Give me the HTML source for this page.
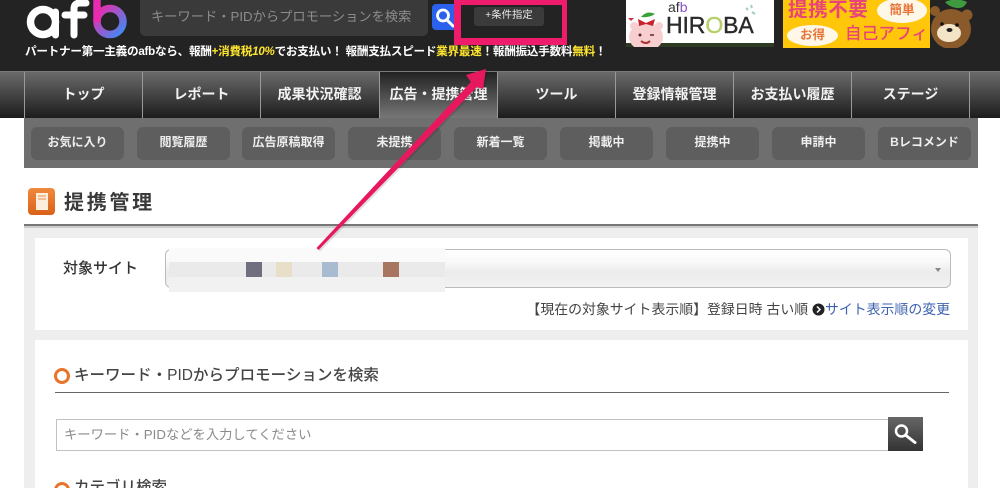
<!DOCTYPE html>
<html lang="ja"><head><meta charset="utf-8"><title>afb</title>
<style>
*{box-sizing:border-box;margin:0;padding:0}
html,body{width:1000px;height:488px;overflow:hidden;background:#fff}
body{position:relative;font-family:"Liberation Sans","Noto Sans CJK JP",sans-serif;color:#333}
#w{position:absolute;left:0;top:0;width:1000px;height:488px;overflow:hidden;filter:blur(.3px)}
.a{position:absolute;white-space:nowrap}
#hd{left:0;top:0;width:1000px;height:72px;background:#232323}
#nav{left:0;top:71px;width:1000px;height:47px;background:linear-gradient(#6a6a6a,#4b4b4b 40%,#1c1c1c);border-top:1px solid #7a7a7a}
.n{position:absolute;top:72px;height:46px;width:118px;text-align:center;line-height:45px;font-size:14px;font-weight:700;color:#f2f2f2;border-left:1px solid #9a9a9a}
.n.on{background:linear-gradient(#222,#444 40%,#777);}
.s{position:absolute;top:127px;width:93px;height:33px;background:#5e5e5e;border-radius:6px;text-align:center;line-height:31px;font-size:12px;font-weight:700;color:#eee}
.y{color:#ffe62e}
</style></head><body><div id="w">
<div class="a" id="hd"></div>

<svg class="a" style="left:0;top:0" width="140" height="44" viewBox="0 0 140 44" role="img" aria-label="afb">
<defs><linearGradient id="g" x1="0" y1="0" x2="1" y2="1"><stop offset="0" stop-color="#ec2aa8"/><stop offset="1" stop-color="#3d8cf5"/></linearGradient></defs>
<circle cx="43" cy="22" r="12.5" fill="none" stroke="#fff" stroke-width="7.5"/>
<path d="M55.5 12V35" stroke="#fff" stroke-width="7" stroke-linecap="round"/>
<path d="M86 3h-6q-6 0-6 6v26M65 15h19" fill="none" stroke="#fff" stroke-width="7" stroke-linecap="round"/>
<circle cx="110" cy="21.500" r="13" fill="none" stroke="url(#g)" stroke-width="7.500"/>
<path d="M97 -2V22" stroke="#e92cae" stroke-width="7.500"/>
</svg>

<div class="a" style="left:140px;top:0;width:288px;height:36px;background:#3a3a3a;border-radius:0 0 5px 5px;color:#8c8c8c;font-size:13.250px;line-height:34px;padding-left:11px">キーワード・PIDからプロモーションを検索</div>
<div class="a" style="left:432px;top:4px;width:26px;height:26px;background:#2a62ee;border-radius:4px"></div>
<svg class="a" style="left:432px;top:4px" width="26" height="26"><circle cx="11" cy="11.500" r="5.500" fill="none" stroke="#fff" stroke-width="2.800"/><path d="M15 16l6 6" stroke="#fff" stroke-width="3" stroke-linecap="round"/></svg>
<div class="a" style="left:474px;top:7px;width:70px;height:19px;background:#3b3b3b;border-radius:3px;color:#e8e8e8;font-size:10.400px;line-height:17px;text-align:center">+条件指定</div>

<div class="a" style="left:25px;top:44px;font-size:11.600px;font-weight:700;line-height:16px;color:#fff;letter-spacing:-.26px">パートナー第一主義のafbなら、報酬<span class="y">+消費税<i>10%</i></span>でお支払い！ 報酬支払スピード<span class="y">業界最速</span>！報酬振込手数料<span class="y">無料</span>！</div>

<!-- HIROBA banner -->
<div class="a" style="left:626px;top:0;width:148px;height:47px;background:#fff;overflow:hidden">
 <div class="a" style="left:0;top:43px;width:148px;height:4px;background:#2d3b22"></div>
 <div class="a" style="left:42px;top:-1px;font-size:14px;color:#333;line-height:16px">af<span style="color:#8a4fd0">b</span></div>
 <div class="a" style="left:40px;top:12px;font-size:23px;font-weight:400;line-height:27px;color:#2a2a2a;letter-spacing:-.1px;-webkit-text-stroke:.4px #2a2a2a">HIR<span style="color:#b5cf6a;-webkit-text-stroke:.4px #b5cf6a">O</span>BA</div>
 <svg class="a" style="left:118px;top:3px" width="16" height="14"><path d="M2 5l2 2M7 2l1 3M8 9l3 2" stroke="#9cd0c0" stroke-width="2"/></svg>
 <svg class="a" style="left:0;top:12px" width="40" height="35"><ellipse cx="20" cy="25" rx="17" ry="14" fill="#f8cfd0"/><circle cx="8" cy="14" r="4" fill="#f8cfd0"/><circle cx="33" cy="14" r="4" fill="#f8cfd0"/><path d="M15 5q6-7 14-3-6 4-14 3z" fill="#3aa03a"/><path d="M12 7l8 4 9-4-2 7-7-2-7 2z" fill="#c8222a"/><path d="M2 6l3 3 3-3" fill="#d03040"/><circle cx="14" cy="23" r="1.500" fill="#622"/><path d="M24 23h4" stroke="#622" stroke-width="1.500"/><path d="M15 29q5 4 9 0" stroke="#a33" stroke-width="2" fill="none"/></svg>
</div>

<!-- Self-affiliate banner -->
<div class="a" style="left:783px;top:0;width:147px;height:48px;background:#ffc60a;overflow:hidden">
 <div class="a" style="left:5px;top:-2px;font-size:19.500px;font-weight:700;line-height:24px;color:#e8447a;letter-spacing:.6px">提携不要</div>
 <div class="a" style="left:94px;top:-2px;width:50px;height:25px;background:#fff8e8;border-radius:50%;text-align:center;font-size:12.500px;font-weight:700;line-height:25px;color:#e8763a">簡単</div>
 <div class="a" style="left:4px;top:25px;width:51px;height:21px;background:#fff8e8;border-radius:50%;text-align:center;font-size:12.500px;font-weight:700;line-height:20px;color:#e8763a">お得</div>
 <div class="a" style="left:62px;top:22px;font-size:16.500px;line-height:24px;color:#e8447a;font-weight:500;letter-spacing:.2px">自己アフィ</div>
</div>
<svg class="a" style="left:930px;top:0" width="46" height="48"><path d="M15 2q11-5 22 0-3 7-10 6-8-1-12-6z" fill="#3f9a3f"/><circle cx="5" cy="11" r="5" fill="#8a5a2a"/><circle cx="37" cy="15" r="5.500" fill="#8a5a2a"/><ellipse cx="21" cy="29" rx="20" ry="20" fill="#8a5a2a"/><ellipse cx="19" cy="33" rx="12" ry="9" fill="#f3e4c8"/><circle cx="12" cy="24" r="1.800" fill="#111"/><circle cx="27" cy="25" r="1.800" fill="#111"/><ellipse cx="19.500" cy="30" rx="3" ry="2" fill="#222"/></svg>

<div class="a" id="nav"></div>
<div class="n" style="left:24px">トップ</div>
<div class="n" style="left:142px">レポート</div>
<div class="n" style="left:260px">成果状況確認</div>
<div class="n on" style="left:379px;width:118px">広告・提携管理</div>
<div class="n" style="left:497px">ツール</div>
<div class="n" style="left:615px">登録情報管理</div>
<div class="n" style="left:733px">お支払い履歴</div>
<div class="n" style="left:851px">ステージ</div>
<div class="n" style="left:969px;width:31px"></div>

<div class="a" style="left:24px;top:118px;width:954px;height:50px;background:#6f6f6f"></div>
<div class="s" style="left:31px">お気に入り</div>
<div class="s" style="left:137px">閲覧履歴</div>
<div class="s" style="left:242px">広告原稿取得</div>
<div class="s" style="left:348px">未提携</div>
<div class="s" style="left:454px">新着一覧</div>
<div class="s" style="left:560px">掲載中</div>
<div class="s" style="left:666px">提携中</div>
<div class="s" style="left:772px">申請中</div>
<div class="s" style="left:878px">Bレコメンド</div>

<!-- Title -->
<div class="a" style="left:28px;top:188px;width:27px;height:27px;border-radius:4px;background:linear-gradient(#f08a3c,#d9611a)"></div>
<svg class="a" style="left:28px;top:188px" width="27" height="27"><path d="M8 5h12v17H8z" fill="#fbeedd"/><path d="M10 8h8M10 11h8" stroke="#e9a26a" stroke-width="1.200"/></svg>
<div class="a" style="left:64px;top:189px;font-size:20px;font-weight:700;line-height:28px;color:#3a3a3a;letter-spacing:2.700px">提携管理</div>

<div class="a" style="left:24px;top:226px;width:954px;height:262px;background:#eee"></div>
<div class="a" style="left:24px;top:224px;width:954px;height:2px;background:#777"></div>
<div class="a" style="left:24px;top:226px;width:954px;height:2px;background:#ccc"></div>
<div class="a" style="left:35px;top:238px;width:933px;height:92px;background:#fff"></div>
<div class="a" style="left:35px;top:340px;width:933px;height:148px;background:#fff"></div>

<div class="a" style="left:63px;top:258px;font-size:15px;line-height:22px;color:#333;font-weight:500">対象サイト</div>
<div class="a" style="left:165px;top:249px;width:786px;height:39px;border:1px solid #bbb;border-radius:6px;background:linear-gradient(#fff,#f9f9f9 30%,#ececec 60%,#f2f2f2)"></div>
<div class="a" style="left:935px;top:268px;width:0;height:0;border:3px solid transparent;border-top:4px solid #888"></div>
<div class="a" style="left:169px;top:248px;width:276px;height:44px;background:#f1f1f1"></div>
<div class="a" style="left:169px;top:248px;width:276px;height:14px;background:#fafafa"></div>
<div class="a" style="left:169px;top:262px;width:276px;height:15px;background:#eaeaea"></div>
<div class="a" style="left:246px;top:262px;width:16px;height:15px;background:#6f6f80"></div>
<div class="a" style="left:276px;top:262px;width:16px;height:15px;background:#e8dfc8"></div>
<div class="a" style="left:322px;top:262px;width:16px;height:15px;background:#a8bbd0"></div>
<div class="a" style="left:383px;top:262px;width:16px;height:15px;background:#a87560"></div>

<div class="a" style="right:50px;top:299px;font-size:13.900px;line-height:20px;color:#444">【現在の対象サイト表示順】登録日時 古い順 <svg width="13" height="13" style="vertical-align:-2px"><circle cx="6.500" cy="6.500" r="6" fill="#222"/><path d="M5 3.500l3 3-3 3" stroke="#fff" stroke-width="1.500" fill="none"/></svg><span style="color:#3f62b0">サイト表示順の変更</span></div>

<div class="a" style="left:54px;top:368px;width:16px;height:16px;border:3.500px solid #e8732a;border-radius:50%"></div>
<div class="a" style="left:74px;top:365px;font-size:15.500px;font-weight:500;line-height:22px;color:#444;letter-spacing:.02px">キーワード・PIDからプロモーションを検索</div>
<div class="a" style="left:55px;top:392px;width:894px;height:1px;background:#666"></div>

<div class="a" style="left:56px;top:419px;width:832px;height:32px;border:1px solid #c2c2c2;border-right:0;color:#8a8a8a;font-size:13.300px;line-height:29px;padding-left:7px">キーワード・PIDなどを入力してください</div>
<div class="a" style="left:888px;top:417px;width:35px;height:34px;background:linear-gradient(#666,#333)"></div>
<svg class="a" style="left:888px;top:417px" width="35" height="34"><circle cx="13.500" cy="14" r="5.500" fill="none" stroke="#fff" stroke-width="2.500"/><path d="M18 18.500l9 7" stroke="#fff" stroke-width="3" stroke-linecap="round"/></svg>

<div class="a" style="left:54px;top:482px;width:16px;height:16px;border:3.500px solid #e8732a;border-radius:50%"></div>
<div class="a" style="left:74px;top:477px;font-size:15.500px;font-weight:500;line-height:22px;color:#444">カテゴリ検索</div>

<!-- Annotations -->
<div class="a" style="left:454px;top:0;width:113px;height:45px;border:solid #ee1c6b;border-width:5px 5px 7px 7px"></div>
<svg class="a" style="left:300px;top:55px" width="200" height="200" viewBox="300 55 200 200">
<path d="M486 69L466 75L471 82L316.500 248L318.500 250L477 87L483 89Z" fill="#000" opacity=".12" transform="translate(1.500 1.500)"/>
<path d="M486 69L466 75L471 82L316.500 248L318.500 250L477 87L483 89Z" fill="#e8185f"/>
</svg>
</div></body></html>
